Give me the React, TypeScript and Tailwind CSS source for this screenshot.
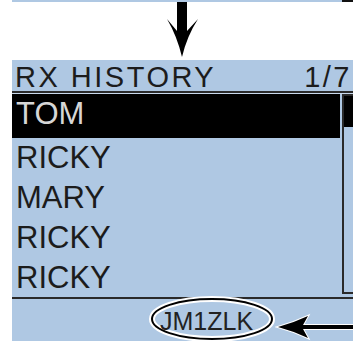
import React from 'react';

const rows = ['RICKY', 'MARY', 'RICKY', 'RICKY'];

const DownArrow = () => (
  <svg width="45" height="58" viewBox="0 0 45 58" className="ml-[160px] block">
    <path d="M17 0 H27 V29 L38 17 Q27 34 22 55 Q17 34 7 17 L17 29 Z" fill="#000" />
  </svg>
);

const LeftArrow = () => (
  <svg width="84" height="30" viewBox="0 0 84 30" className="absolute left-[263px] top-[13px]">
    <path
      d="M3 15 Q18 11 33 4 L28 13 H84 V17 H28 L33 26 Q18 19 3 15 Z"
      fill="#000"
      stroke="#fff"
      strokeWidth="2"
      strokeLinejoin="miter"
      paintOrder="stroke"
    />
  </svg>
);

const Callout = () => (
  <svg width="128" height="46" viewBox="0 0 128 46" className="absolute left-[136px] top-[-3px]">
    <ellipse cx="64" cy="23" rx="60" ry="20" fill="none" stroke="#fff" strokeWidth="6" />
    <ellipse cx="64" cy="23" rx="60" ry="20" fill="none" stroke="#000" strokeWidth="2" />
  </svg>
);

export default function App() {
  return (
    <div className="relative w-[353px] h-[341px] overflow-hidden bg-white font-['Liberation_Sans',Arial,sans-serif]">
      {/* edge of the previous screen */}
      <div className="flex h-[2px] ml-[12px]">
        <div className="w-[330px] bg-[#afc8e3]" />
        <div className="flex-1 bg-[#111]" />
      </div>

      <div className="h-[58px]">
        <DownArrow />
      </div>

      <div className="ml-[12px] w-[345px] bg-[#afc8e3] text-[#1c1c1c]">
        <div className="flex h-[31px] items-start justify-between pl-[3px] pr-[1px] text-[29px] leading-[35px] tracking-[2.5px]">
          <span>RX HISTORY</span>
          <span className="pr-[4px]">1/7</span>
        </div>
        <div className="h-[2px] bg-[#2a2a2a]" />
        <div className="h-px bg-[#c9d9ec]" />

        <div className="flex gap-[2px]">
          <div className="w-[328px] text-[31px]">
            <div className="h-[44px] bg-black pl-[4px] leading-[40px] text-[#d6d6d6]">TOM</div>
            {rows.map((name, i) => (
              <div key={i} className={`pl-[4px] ${i === 3 ? 'h-[39px] leading-[39px]' : 'h-[40px] leading-[40px]'}`}>
                {name}
              </div>
            ))}
          </div>
          <div className="flex h-[200px] w-[15px] flex-col border-2 border-[#2a2a2a]">
            <div className="h-[31px] bg-black" />
          </div>
        </div>

        <div className="h-[2px] bg-[#2a2a2a]" />

        <div className="relative h-[42px] pl-[148px] pt-[3px] text-[25px] leading-[38px] text-[#222]">
          <Callout />
          <span className="relative">JM1ZLK</span>
          <LeftArrow />
        </div>
      </div>
    </div>
  );
}
